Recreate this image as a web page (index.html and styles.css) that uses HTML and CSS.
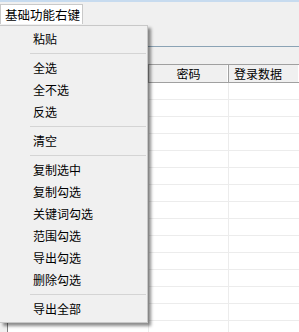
FILE: index.html
```html
<!DOCTYPE html>
<html lang="zh-CN">
<head>
<meta charset="utf-8">
<link rel="stylesheet" href="styles.css">
</head>
<body>
<div class="topbar"></div>
<div class="tabs"><div class="tab">基础功能右键</div></div>
<div class="panel">
  <div class="grid">
    <div class="hrow">
      <div class="hc c1"></div>
      <div class="hc c2">密码</div>
      <div class="hc c3">登录数据</div>
    </div>
    <div class="row"><div class="cell c1"></div><div class="cell c2"></div><div class="cell c3"></div></div>
    <div class="row"><div class="cell c1"></div><div class="cell c2"></div><div class="cell c3"></div></div>
    <div class="row"><div class="cell c1"></div><div class="cell c2"></div><div class="cell c3"></div></div>
    <div class="row"><div class="cell c1"></div><div class="cell c2"></div><div class="cell c3"></div></div>
    <div class="row"><div class="cell c1"></div><div class="cell c2"></div><div class="cell c3"></div></div>
    <div class="row"><div class="cell c1"></div><div class="cell c2"></div><div class="cell c3"></div></div>
    <div class="row"><div class="cell c1"></div><div class="cell c2"></div><div class="cell c3"></div></div>
    <div class="row"><div class="cell c1"></div><div class="cell c2"></div><div class="cell c3"></div></div>
    <div class="row"><div class="cell c1"></div><div class="cell c2"></div><div class="cell c3"></div></div>
    <div class="row"><div class="cell c1"></div><div class="cell c2"></div><div class="cell c3"></div></div>
    <div class="row"><div class="cell c1"></div><div class="cell c2"></div><div class="cell c3"></div></div>
    <div class="row"><div class="cell c1"></div><div class="cell c2"></div><div class="cell c3"></div></div>
    <div class="row"><div class="cell c1"></div><div class="cell c2"></div><div class="cell c3"></div></div>
    <div class="row"><div class="cell c1"></div><div class="cell c2"></div><div class="cell c3"></div></div>
    <div class="row"><div class="cell c1"></div><div class="cell c2"></div><div class="cell c3"></div></div>
  </div>
</div>
<div class="menu">
  <div class="item">粘贴</div>
  <div class="sep"></div>
  <div class="item">全选</div>
  <div class="item">全不选</div>
  <div class="item">反选</div>
  <div class="sep"></div>
  <div class="item">清空</div>
  <div class="sep"></div>
  <div class="item">复制选中</div>
  <div class="item">复制勾选</div>
  <div class="item">关键词勾选</div>
  <div class="item">范围勾选</div>
  <div class="item">导出勾选</div>
  <div class="item">删除勾选</div>
  <div class="sep"></div>
  <div class="item">导出全部</div>
</div>
</body>
</html>
```
FILE: styles.css
```css
html, body {
  margin: 0;
  padding: 0;
}
body {
  width: 299px;
  height: 332px;
  overflow: hidden;
  position: relative;
  background: #f0f0f0;
  font-family: "Noto Sans CJK SC", "Microsoft YaHei", sans-serif;
  font-size: 12px;
  color: #000;
}
.topbar {
  height: 2px;
  background: #c7dbef;
}
.tabs {
  padding-top: 2px;
  display: flex;
}
.tab {
  width: 81px;
  height: 19px;
  border: 1px solid #c9c9c9;
  border-bottom: none;
  background: #fff;
  font-size: 12.5px;
  line-height: 19px;
  text-indent: 4px;
  white-space: nowrap;
  overflow: hidden;
}
.panel {
  margin-top: 22px;
  border-top: 1px solid #8ba3b5;
  padding-top: 17px;
}
.grid {
  margin-left: 7px;
  border-left: 1px solid #828282;
  background: #fff;
}
.hrow {
  display: flex;
  background: #f0f0f0;
  border-top: 1px solid #a0a0a0;
  border-bottom: 1px solid #a0a0a0;
  height: 17px;
}
.hc {
  line-height: 17px;
  border-right: 1px solid #a0a0a0;
  box-shadow: inset -1px 0 0 #fff;
  white-space: nowrap;
}
.row {
  display: flex;
  height: 16px;
  border-bottom: 1px solid #ececec;
}
.row:first-of-type {
  height: 17px;
}
.cell {
  border-right: 1px solid #ececec;
}
.c1 {
  width: 140px;
}
.c2 {
  width: 79px;
  text-align: center;
}
.c3 {
  flex: 1;
  padding-left: 5px;
  border-right: none;
}
.menu {
  position: absolute;
  left: 0;
  top: 25px;
  width: 148px;
  box-sizing: border-box;
  padding: 2px 0;
  background: #f0f0f0;
  border: 1px solid #c8c8c8;
  border-left: none;
  box-shadow: 3px 3px 3px rgba(0, 0, 0, 0.45);
}
.item {
  height: 22px;
  line-height: 21px;
  padding-left: 33px;
  white-space: nowrap;
}
.sep {
  height: 1px;
  margin: 3px 1px 3px 30px;
  background: #d4d4d4;
}
```
